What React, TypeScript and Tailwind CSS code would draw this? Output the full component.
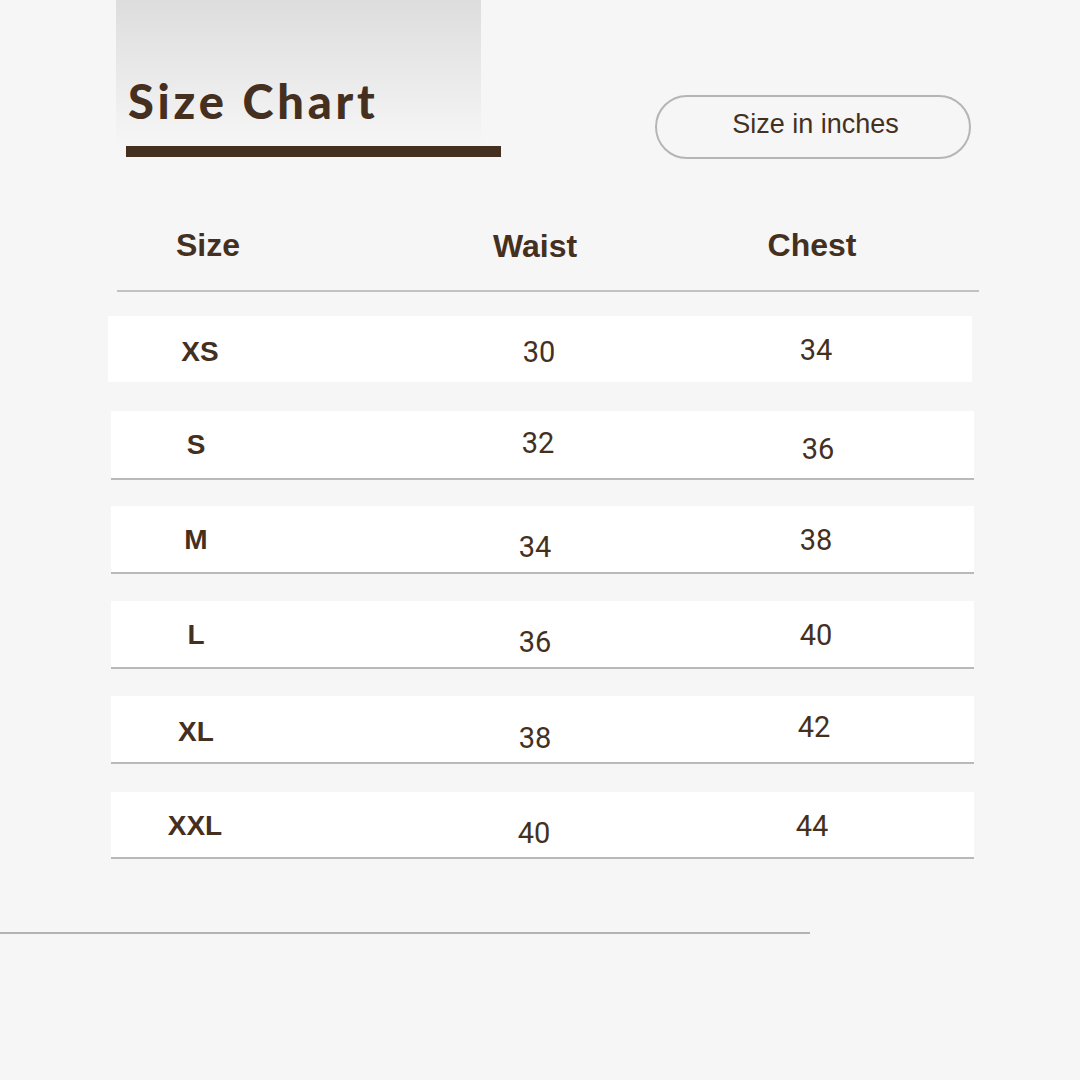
type SizeRow = {
  size: string;
  waist: string;
  chest: string;
  rowClass: string;
  labelClass: string;
  waistClass: string;
  chestClass: string;
};

// per-row nudges follow the source design, which is not perfectly aligned
const rows: SizeRow[] = [
  {
    size: "XS",
    waist: "30",
    chest: "34",
    rowClass: "ml-[108px] w-[864px] h-[66px] mb-[29px]",
    labelClass: "ml-[32px] pt-[22px]",
    waistClass: "ml-[219px] pt-[22px]",
    chestClass: "ml-[157px] pt-[20px]",
  },
  {
    size: "S",
    waist: "32",
    chest: "36",
    rowClass: "ml-[111px] w-[863px] h-[69px] border-b-2 mb-[26px]",
    labelClass: "ml-[25px] pt-[20px]",
    waistClass: "ml-[222px] pt-[18px]",
    chestClass: "ml-[160px] pt-[24px]",
  },
  {
    size: "M",
    waist: "34",
    chest: "38",
    rowClass: "ml-[111px] w-[863px] h-[68px] border-b-2 mb-[27px]",
    labelClass: "ml-[25px] pt-[20px]",
    waistClass: "ml-[219px] pt-[27px]",
    chestClass: "ml-[161px] pt-[20px]",
  },
  {
    size: "L",
    waist: "36",
    chest: "40",
    rowClass: "ml-[111px] w-[863px] h-[68px] border-b-2 mb-[27px]",
    labelClass: "ml-[25px] pt-[20px]",
    waistClass: "ml-[219px] pt-[27px]",
    chestClass: "ml-[161px] pt-[20px]",
  },
  {
    size: "XL",
    waist: "38",
    chest: "42",
    rowClass: "ml-[111px] w-[863px] h-[68px] border-b-2 mb-[28px]",
    labelClass: "ml-[25px] pt-[22px]",
    waistClass: "ml-[219px] pt-[28px]",
    chestClass: "ml-[159px] pt-[17px]",
  },
  {
    size: "XXL",
    waist: "40",
    chest: "44",
    rowClass: "ml-[111px] w-[863px] h-[67px] border-b-2",
    labelClass: "ml-[24px] pt-[20px]",
    waistClass: "ml-[219px] pt-[27px]",
    chestClass: "ml-[158px] pt-[20px]",
  },
];

function TableRow({ row }: { row: SizeRow }) {
  return (
    <div
      className={`flex items-start border-[#b9b9b9] bg-white ${row.rowClass}`}
    >
      <span
        className={`w-[120px] text-center font-['Liberation_Sans',Arial,sans-serif] text-[28px] font-bold leading-none ${row.labelClass}`}
      >
        {row.size}
      </span>
      <span
        className={`w-[120px] text-center font-['Roboto',sans-serif] text-[29px] leading-none ${row.waistClass}`}
      >
        {row.waist}
      </span>
      <span
        className={`w-[120px] text-center font-['Roboto',sans-serif] text-[29px] leading-none ${row.chestClass}`}
      >
        {row.chest}
      </span>
    </div>
  );
}

export default function App() {
  return (
    <div className="h-[1080px] w-[1080px] overflow-hidden bg-[#f6f6f6] text-[#45301f]">
      {/* header: title block + unit pill */}
      <div className="flex">
        <div className="ml-[116px] flex flex-col">
          <div className="flex h-[146px] w-[365px] items-end bg-gradient-to-b from-[#dddddd] to-[#f6f6f6] pb-[21px] pl-[12px]">
            <h1 className="font-['Lato',sans-serif] text-[47px] font-black leading-none tracking-[0.08em]">
              Size Chart
            </h1>
          </div>
          <div className="ml-[10px] h-[11px] w-[375px] bg-[#45301f]" />
        </div>

        <div className="ml-auto mr-[109px] mt-[95px] flex h-[64px] w-[316px] items-center justify-center rounded-full border-2 border-[#b5b5b5] pb-[6px] pl-[5px]">
          <span className="font-['Liberation_Sans',Arial,sans-serif] text-[27px]">
            Size in inches
          </span>
        </div>
      </div>

      {/* column headings */}
      <div className="ml-[117px] mt-[70px] flex w-[862px] font-['Liberation_Sans',Arial,sans-serif] text-[32px] font-bold leading-none">
        <span className="ml-[11px] w-[160px] text-center">Size</span>
        <span className="ml-[167px] mt-[1px] w-[160px] text-center">Waist</span>
        <span className="ml-[117px] w-[160px] text-center">Chest</span>
      </div>
      <div className="ml-[117px] mt-[28px] h-[2px] w-[862px] bg-[#c2c2c2]" />

      <div className="mt-[24px] flex flex-col">
        {rows.map((row) => (
          <TableRow key={row.size} row={row} />
        ))}
      </div>

      <div className="mt-[73px] h-[2px] w-[810px] bg-[#b3b3b3]" />
    </div>
  );
}
